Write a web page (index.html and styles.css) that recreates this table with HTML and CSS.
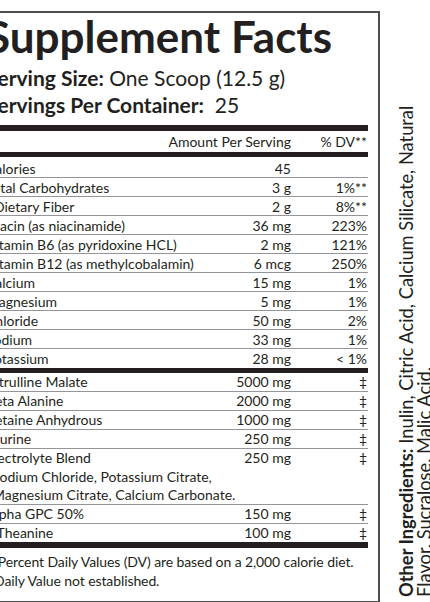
FILE: index.html
```html
<!DOCTYPE html>
<html lang="en">
<head>
    <meta charset="UTF-8">
    <meta name="viewport" content="width=device-width, initial-scale=1.0">
    <title>Supplement Facts</title>
    <link rel="stylesheet" href="styles.css">
</head>
<body>

    <div class="page">

        <!-- Facts panel -->
        <div class="label">
            <h1 class="title">Supplement Facts</h1>
            <div class="servings">
                <p><b>Serving Size:</b> One Scoop (12.5 g)</p>
                <p><b>Servings Per Container:</b>&nbsp; 25</p>
            </div>

            <div class="bar bar-thick"></div>
            <div class="head">
                <span class="amt">Amount Per Serving</span>
                <span class="dv">% DV**</span>
            </div>
            <div class="bar"></div>

            <div class="group upper">
                <div class="row"><span>Calories</span><span class="amt">45</span><span class="dv"></span></div>
                <div class="row"><span>Total Carbohydrates</span><span class="amt">3 g</span><span class="dv">1%**</span></div>
                <div class="row"><span class="sub">Dietary Fiber</span><span class="amt">2 g</span><span class="dv">8%**</span></div>
                <div class="row"><span>Niacin (as niacinamide)</span><span class="amt">36 mg</span><span class="dv">223%</span></div>
                <div class="row"><span>Vitamin B6 (as pyridoxine HCL)</span><span class="amt">2 mg</span><span class="dv">121%</span></div>
                <div class="row"><span>Vitamin B12 (as methylcobalamin)</span><span class="amt">6 mcg</span><span class="dv">250%</span></div>
                <div class="row"><span>Calcium</span><span class="amt">15 mg</span><span class="dv">1%</span></div>
                <div class="row"><span>Magnesium</span><span class="amt">5 mg</span><span class="dv">1%</span></div>
                <div class="row"><span>Chloride</span><span class="amt">50 mg</span><span class="dv">2%</span></div>
                <div class="row"><span>Sodium</span><span class="amt">33 mg</span><span class="dv">1%</span></div>
                <div class="row"><span>Potassium</span><span class="amt">28 mg</span><span class="dv">&lt; 1%</span></div>
            </div>

            <div class="bar"></div>

            <div class="group">
                <div class="row"><span>Citrulline Malate</span><span class="amt">5000 mg</span><span class="dv">‡</span></div>
                <div class="row"><span>Beta Alanine</span><span class="amt">2000 mg</span><span class="dv">‡</span></div>
                <div class="row"><span>Betaine Anhydrous</span><span class="amt">1000 mg</span><span class="dv">‡</span></div>
                <div class="row"><span>Taurine</span><span class="amt">250 mg</span><span class="dv">‡</span></div>
                <div class="row">
                    <span>Electrolyte Blend</span><span class="amt">250 mg</span><span class="dv">‡</span>
                    <span class="blend">Sodium Chloride, Potassium Citrate,<br>Magnesium Citrate, Calcium Carbonate.</span>
                </div>
                <div class="row"><span>Alpha GPC 50%</span><span class="amt">150 mg</span><span class="dv">‡</span></div>
                <div class="row"><span>L-Theanine</span><span class="amt">100 mg</span><span class="dv">‡</span></div>
            </div>

            <div class="bar bar-thick"></div>

            <div class="notes">
                <p>**Percent Daily Values (DV) are based on a 2,000 calorie diet.</p>
                <p>‡Daily Value not established.</p>
            </div>
        </div>

        <!-- Other ingredients, printed sideways -->
        <div class="other">
            <p><b>Other Ingredients:</b> Inulin, Citric Acid, Calcium Silicate, Natural<br>Flavor, Sucralose, Malic Acid.</p>
        </div>

    </div>

</body>
</html>
```

FILE: styles.css
```css
body {
    margin: 0;
    background: #ffffff;
    color: #231f20;
    font-family: 'Lato', 'Open Sans', sans-serif;
    overflow: hidden;
}
p {
    margin: 0;
}
.page {
    display: flex;
    align-items: flex-start;
}
.label {
    flex: none;
    width: 382px;
    margin: 11px 0 0 -25px;
    padding: 1px 10px 11px 9px;
    border: 2px solid #4d4d4f;
}
.title {
    margin: 0;
    font-size: 44px;
    line-height: 44px;
    font-weight: 700;
    white-space: nowrap;
}
.servings {
    margin-top: 6px;
    font-size: 21px;
    line-height: 27px;
    white-space: nowrap;
}
.bar {
    height: 5px;
    background: #231f20;
}
.bar-thick {
    height: 6px;
    margin-top: 7px;
}
.group + .bar-thick {
    margin-top: 0;
}
.head {
    display: flex;
    justify-content: flex-end;
    font-size: 14px;
    line-height: 21px;
    white-space: nowrap;
}
.row {
    display: grid;
    grid-template-columns: minmax(0, 1fr) 90px 77px;
    font-size: 14px;
    line-height: 18.2px;
    white-space: nowrap;
}
.upper {
    padding-top: 1.5px;
}
.upper .row {
    padding-top: 1px;
    line-height: 17.1px;
}
.group .row + .row {
    border-top: 1px solid #939598;
}
.amt {
    text-align: right;
}
.dv {
    width: 77px;
    text-align: right;
    padding-right: 1px;
    box-sizing: border-box;
}
.sub {
    padding-left: 8px;
}
.blend {
    grid-column: 1 / -1;
    padding-left: 6px;
}
.notes {
    margin-top: 4px;
    font-size: 14px;
    line-height: 19px;
    letter-spacing: -0.1px;
    white-space: nowrap;
}
.other {
    flex: none;
    height: 478px;
    margin: 119px 0 0 17px;
    writing-mode: vertical-rl;
    transform: rotate(180deg);
}
.other p {
    font-size: 18.3px;
    line-height: 18px;
    white-space: nowrap;
}
```
